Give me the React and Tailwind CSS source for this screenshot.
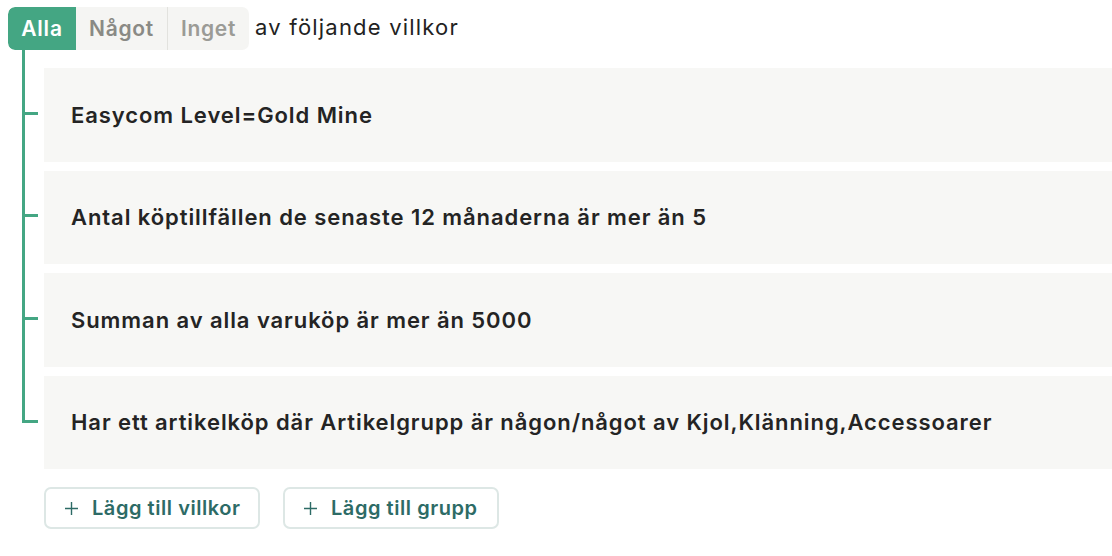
import React from "react";

const GREEN = "bg-[#44a683]";

const conditions = [
  "Easycom Level=Gold Mine",
  "Antal köptillfällen de senaste 12 månaderna är mer än 5",
  "Summan av alla varuköp är mer än 5000",
  "Har ett artikelköp där Artikelgrupp är någon/något av Kjol,Klänning,Accessoarer",
];

function Row({ text, first, last }) {
  const top = first ? "h-[18px]" : "h-[9px]";
  const mt = first ? "mt-[18px]" : "mt-[9px]";
  return (
    <div className="flex">
      {last ? (
        <div className="w-[22px] flex flex-col">
          <div className={`${top} border-l-[3px] border-[#44a683]`} />
          <div className="h-[47px] w-[16px] border-l-[3px] border-b-[3px] border-[#44a683]" />
        </div>
      ) : (
        <div className="w-[22px] flex flex-col border-l-[3px] border-[#44a683]">
          <div className={top} />
          <div className="flex-1 flex items-center pb-[3px]">
            <div className={`h-[3px] w-[13px] ${GREEN}`} />
          </div>
        </div>
      )}
      <div
        className={`flex-1 ${mt} h-[93.5px] bg-[#f7f7f5] flex items-center pl-[27px] pt-[1px] text-[22px] font-semibold text-[#242424] tracking-[0.92px]`}
      >
        {text}
      </div>
    </div>
  );
}

function AddButton({ label }) {
  return (
    <button className="h-[42px] w-[216px] rounded-[7px] border-2 border-[#dde7e5] bg-white flex items-center pl-[19px] text-[#2d6b66] text-[20px] font-semibold tracking-[0.55px]">
      <svg width="13" height="13" viewBox="0 0 13 13" className="mr-[14px]">
        <path d="M6.5 0v13M0 6.5h13" stroke="#2d6b66" strokeWidth="1.4" fill="none" />
      </svg>
      {label}
    </button>
  );
}

export default function App() {
  return (
    <div
      className="w-[1112px] h-[556px] overflow-hidden bg-white pl-[8px] pt-[7px]"
      style={{ fontFamily: "Inter, 'Noto Sans', sans-serif" }}
    >
      <div className="flex items-center h-[43px]">
        <div className="flex h-full rounded-[7px] bg-[#f5f5f3] overflow-hidden">
          <div className={`w-[68px] ${GREEN} text-white text-[21px] font-semibold tracking-[0.8px] flex items-center justify-center rounded-[7px] rounded-r-none`}>
            Alla
          </div>
          <div className="w-[92px] text-[#8a8a85] text-[21px] font-semibold tracking-[0.7px] flex items-center justify-center border-r border-[#e2e2de]">
            Något
          </div>
          <div className="w-[81px] text-[#9b9b96] text-[21px] font-semibold tracking-[0.7px] flex items-center justify-center">
            Inget
          </div>
        </div>
        <div className="ml-[6px] text-[22px] text-[#222222] tracking-[1.2px] pb-[2px]">av följande villkor</div>
      </div>
      <div className="ml-[14px]">
        {conditions.map((c, i) => (
          <Row key={i} text={c} first={i === 0} last={i === conditions.length - 1} />
        ))}
        <div className="ml-[22px] mt-[18px] flex gap-[23px]">
          <AddButton label="Lägg till villkor" />
          <AddButton label="Lägg till grupp" />
        </div>
      </div>
    </div>
  );
}
